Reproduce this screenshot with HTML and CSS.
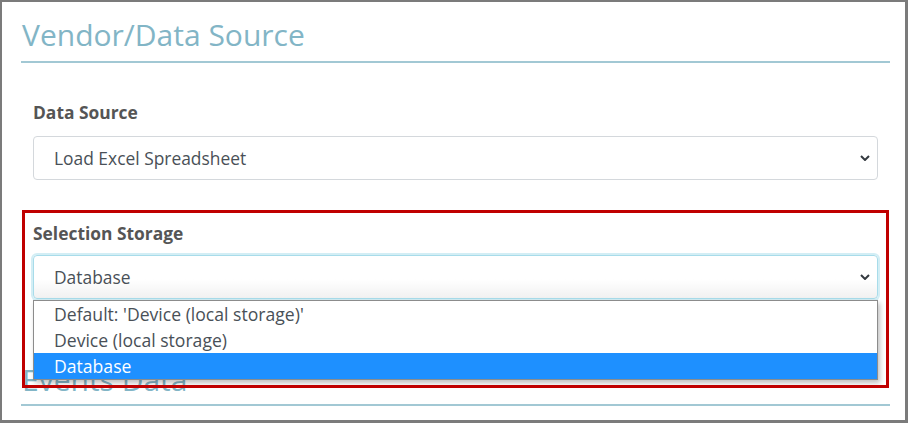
FILE: index.html
```html
<!DOCTYPE html>
<html lang="en">
<head>
    <meta charset="UTF-8">
    <title>Vendor/Data Source</title>
    <link rel="stylesheet" href="styles.css">
</head>
<body>
<div class="frame">
    <div class="panel">
        <h2 class="legend">Vendor/Data Source</h2>

        <div class="group">
            <label class="label">Data Source</label>
            <div class="select">
                <span>Load Excel Spreadsheet</span>
                <svg class="chevron" viewBox="0 0 10 6" width="10" height="6"><path d="M1 1l4 4 4-4" fill="none" stroke="#343a40" stroke-width="2"/></svg>
            </div>
        </div>

        <div class="group group-open">
            <label class="label">Selection Storage</label>
            <div class="select select-focus">
                <span>Database</span>
                <svg class="chevron" viewBox="0 0 10 6" width="10" height="6"><path d="M1 1l4 4 4-4" fill="none" stroke="#343a40" stroke-width="2"/></svg>
            </div>
            <ul class="options">
                <li>Default: 'Device (local storage)'</li>
                <li>Device (local storage)</li>
                <li class="active">Database</li>
            </ul>
        </div>

        <h2 class="legend legend-next">Events Data</h2>
    </div>
    <div class="callout"></div>
</div>
</body>
</html>
```

FILE: styles.css
```css
* {
    margin: 0;
    padding: 0;
    box-sizing: border-box;
}

body {
    font-family: "Open Sans", "Noto Sans", sans-serif;
    background: #fff;
}

.frame {
    position: relative;
    width: 908px;
    height: 423px;
    border: solid #7b7b7b;
    border-width: 2px 3px 3px 2px;
    overflow: hidden;
}

.panel {
    padding: 0 15px 0 19px;
}

.legend {
    font-size: 30px;
    font-weight: 400;
    color: #82b5c6;
    line-height: 36px;
    padding: 15px 0 0 1px;
    height: 61px;
    border-bottom: 2px solid #a2c8d4;
}

.legend-next {
    margin-top: 63px;
    height: 44px;
    padding-top: 0;
}

.group {
    position: relative;
    padding: 0 12px;
}

.label {
    display: block;
    font-size: 17.4px;
    font-weight: 700;
    color: #555;
    padding-top: 37px;
    line-height: 24px;
    margin-bottom: 12px;
}

.group-open .label {
    padding-top: 41px;
    margin-bottom: 10px;
}

.select {
    display: flex;
    align-items: center;
    justify-content: space-between;
    height: 44px;
    padding: 0 7px 0 20px;
    border: 1px solid #d4d8dc;
    border-radius: 4px;
    font-size: 17.4px;
    color: #495057;
    background: #fff;
}

.select-focus {
    border-color: #a8dcea;
    box-shadow: 0 0 0 2px #d3eef5;
    background: linear-gradient(#fff 55%, #f1f1f1);
}

.chevron {
    display: block;
}

.options {
    position: absolute;
    left: 12px;
    right: 12px;
    top: 100%;
    margin-top: 1px;
    list-style: none;
    background: #fff;
    border: 1px solid #8c8c8c;
    box-shadow: 2px 3px 5px rgba(0, 0, 0, 0.25);
    z-index: 2;
}

.options li {
    height: 26px;
    line-height: 26px;
    padding-left: 20px;
    font-size: 17.6px;
    color: #495057;
}

.options li.active {
    background: #1e90ff;
    color: #fff;
}

.callout {
    position: absolute;
    left: 20px;
    top: 208px;
    width: 867px;
    height: 178px;
    border: 3px solid #c00000;
    z-index: 3;
}
```
